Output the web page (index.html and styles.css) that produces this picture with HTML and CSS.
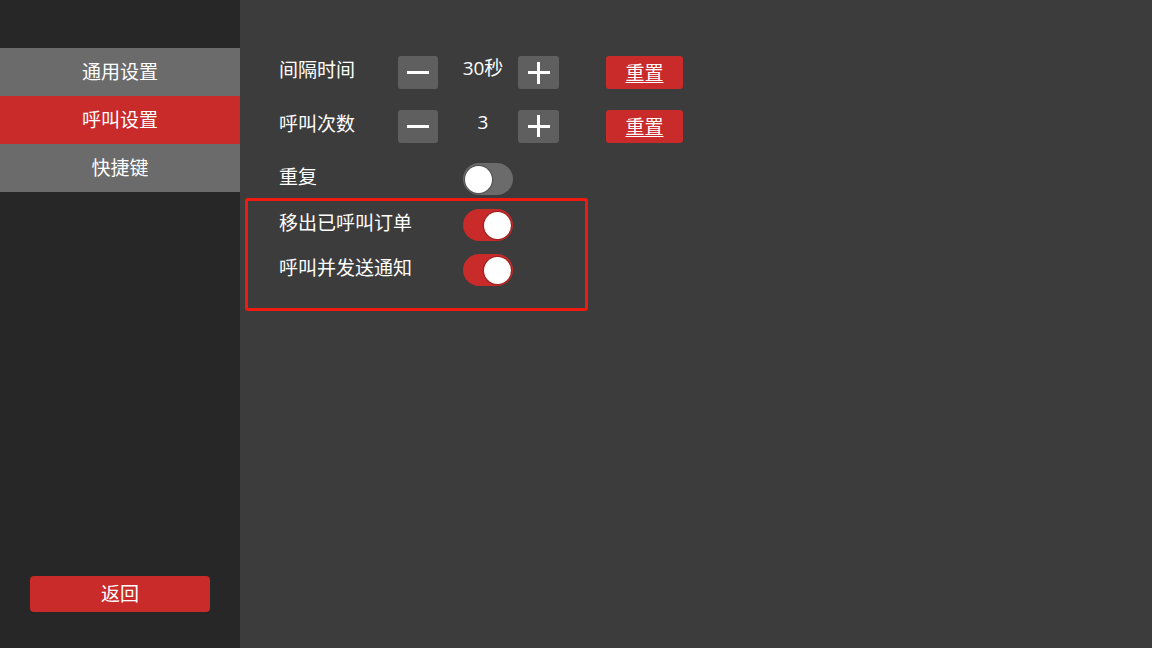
FILE: index.html
```html
<!DOCTYPE html>
<html lang="zh">
<head>
<meta charset="utf-8">
<title>呼叫设置</title>
<link rel="stylesheet" href="styles.css">
</head>
<body>
<div class="app">
  <aside class="sidebar">
    <nav class="menu">
      <div class="menu-item">通用设置</div>
      <div class="menu-item active">呼叫设置</div>
      <div class="menu-item">快捷键</div>
    </nav>
    <div class="spacer"></div>
    <div class="back-wrap"><button class="back-btn">返回</button></div>
  </aside>
  <main class="content">
    <div class="row stepper-row">
      <span class="label label-step">间隔时间</span>
      <button class="step-btn minus"><span class="bar-h"></span></button>
      <span class="value">30秒</span>
      <button class="step-btn plus"><span class="bar-h"></span><span class="bar-v"></span></button>
      <button class="reset-btn">重置</button>
    </div>
    <div class="row stepper-row second">
      <span class="label label-step">呼叫次数</span>
      <button class="step-btn minus"><span class="bar-h"></span></button>
      <span class="value">3</span>
      <button class="step-btn plus"><span class="bar-h"></span><span class="bar-v"></span></button>
      <button class="reset-btn">重置</button>
    </div>
    <div class="row toggle-row repeat">
      <span class="label label-toggle">重复</span>
      <span class="toggle"><span class="knob"></span></span>
    </div>
    <div class="highlight">
      <div class="row toggle-row">
        <span class="label label-toggle">移出已呼叫订单</span>
        <span class="toggle on"><span class="knob"></span></span>
      </div>
      <div class="row toggle-row gap">
        <span class="label label-toggle">呼叫并发送通知</span>
        <span class="toggle on"><span class="knob"></span></span>
      </div>
    </div>
  </main>
</div>
</body>
</html>
```
FILE: styles.css
```css
* { box-sizing: border-box; }
html, body {
  margin: 0;
  padding: 0;
  width: 1152px;
  height: 648px;
  overflow: hidden;
}
body {
  font-family: "Noto Sans CJK SC", "Noto Sans", sans-serif;
  color: #ffffff;
  font-size: 19px;
}
.app {
  display: flex;
  width: 1152px;
  height: 648px;
}
.sidebar {
  width: 240px;
  background: #272727;
  display: flex;
  flex-direction: column;
  padding-top: 48px;
  padding-bottom: 36px;
}
.menu { display: flex; flex-direction: column; }
.menu-item {
  height: 48px;
  background: #6b6b6b;
  display: flex;
  align-items: center;
  justify-content: center;
  font-size: 19px;
  line-height: 1;
  padding-bottom: 4px;
}
.menu-item.active { background: #c92a2a; }
.spacer { flex: 1; }
.back-wrap { display: flex; justify-content: center; }
.back-btn {
  width: 180px;
  height: 36px;
  border: none;
  border-radius: 4px;
  background: #c92a2a;
  color: #fff;
  font-family: inherit;
  font-size: 19px;
  line-height: 1;
  padding: 0 0 4px 0;
}
.content {
  flex: 1;
  background: #3c3c3c;
  padding-top: 56px;
  padding-left: 39px;
}
.row { display: flex; align-items: center; }
.stepper-row { height: 33px; }
.stepper-row.second { margin-top: 20px; height: 34px; }
.label { line-height: 1; font-size: 19px; }
.label-step { width: 119px; margin-top: -8px; }
.step-btn {
  width: 40px;
  height: 33px;
  border: none;
  border-radius: 3px;
  background: #5f5f5f;
  padding: 0;
  position: relative;
  display: flex;
  align-items: center;
  justify-content: center;
}
.step-btn.plus { width: 41px; }
.bar-h {
  display: block;
  width: 22px;
  height: 3px;
  background: #fff;
}
.bar-v {
  position: absolute;
  left: 50%;
  top: 50%;
  width: 3px;
  height: 22px;
  margin-left: -1.5px;
  margin-top: -11px;
  background: #fff;
}
.value {
  width: 80px;
  padding-left: 10px;
  text-align: center;
  font-family: "Open Sans", "Noto Sans CJK SC", sans-serif;
  font-size: 19px;
  line-height: 1;
  margin-top: -8px;
}
.reset-btn {
  margin-left: 47px;
  width: 77px;
  height: 33px;
  border: none;
  border-radius: 3px;
  background: #c92a2a;
  color: #fff;
  font-family: inherit;
  font-weight: 400;
  font-size: 19px;
  line-height: 1;
  text-decoration: underline;
  text-decoration-thickness: 1px;
  text-underline-offset: 2px;
  padding: 0 0 2px 0;
}
.toggle-row { height: 32px; }
.toggle-row.repeat { margin-top: 20px; }
.label-toggle { width: 184px; margin-top: -8px; }
.toggle {
  width: 50px;
  height: 32px;
  border-radius: 16px;
  background: #6b6b6b;
  display: flex;
  align-items: center;
  padding: 0 2px;
}
.toggle.on { background: #c92a2a; justify-content: flex-end; }
.knob {
  width: 27px;
  height: 27px;
  border-radius: 50%;
  background: #fff;
  box-shadow: 0 0 1px 1px rgba(0,0,0,0.25);
}
.highlight {
  margin-top: 3px;
  margin-left: -34px;
  width: 343px;
  border: 3px solid #f01a10;
  border-radius: 3px;
  padding: 8px 0 22px 31px;
}
.toggle-row.gap { margin-top: 13px; }
```
